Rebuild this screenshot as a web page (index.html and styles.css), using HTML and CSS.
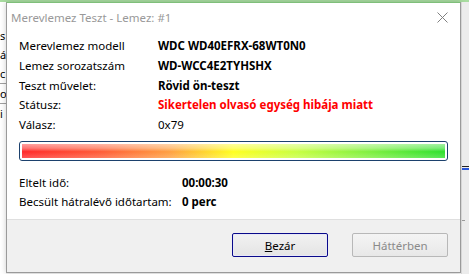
FILE: index.html
```html
<html lang="hu">
<head>
    <meta charset="UTF-8">
    <title>Merevlemez Teszt</title>
    <link rel="stylesheet" href="styles.css">
</head>
<body>
    <div class="desktop">
        <div class="side side-left">
            <span>s</span>
            <span>á</span>
            <span>c</span>
            <span class="rule"></span>
            <span>o</span>
            <span class="rule"></span>
            <span>i</span>
        </div>

        <div class="window">
            <div class="titlebar">
                <span class="title">Merevlemez Teszt - Lemez: #1</span>
                <svg class="close" width="11" height="11" viewBox="0 0 11 11">
                    <path d="M0.5 0.5 L10.5 10.5 M10.5 0.5 L0.5 10.5" stroke="#808080" stroke-width="1" fill="none"/>
                </svg>
            </div>

            <div class="content">
                <div class="info">
                    <div class="row"><span class="label">Merevlemez modell</span><span class="value bold">WDC WD40EFRX-68WT0N0</span></div>
                    <div class="row"><span class="label">Lemez sorozatszám</span><span class="value bold">WD-WCC4E2TYHSHX</span></div>
                    <div class="row"><span class="label">Teszt művelet:</span><span class="value bold">Rövid ön-teszt</span></div>
                    <div class="row"><span class="label">Státusz:</span><span class="value bold error">Sikertelen olvasó egység hibája miatt</span></div>
                    <div class="row"><span class="label">Válasz:</span><span class="value">0x79</span></div>
                </div>

                <div class="progress">
                    <div class="progress-fill"></div>
                </div>

                <div class="info info-time">
                    <div class="row"><span class="label">Eltelt idő:</span><span class="value bold">00:00:30</span></div>
                    <div class="row"><span class="label">Becsült hátralévő időtartam:</span><span class="value bold">0 perc</span></div>
                </div>
            </div>

            <div class="footer">
                <button class="btn btn-default"><u>B</u>ezár</button>
                <button class="btn" disabled>Háttérben</button>
            </div>
        </div>

        <div class="side side-right">
            <span class="line-dark"></span>
            <span class="line-blue"></span>
            <span class="tick"></span>
        </div>
    </div>
</body>
</html>
```

FILE: styles.css
```css
:root {
    --text: #000000;
    --muted: #999999;
    --error: #ff0000;
    --footer: #f0f0f0;
    --divider: #dfdfdf;
    --bar-border: #1c416d;
}

body {
    margin: 0;
    font-family: 'Noto Sans', 'Open Sans', sans-serif;
    font-size: 11.5px;
    color: var(--text);
    background: #f3f3f3;
    overflow: hidden;
}

.desktop {
    display: flex;
    height: 274px;
    border-top: 2px solid #a8dca0;
    box-sizing: border-box;
}

.side {
    display: flex;
    flex-direction: column;
    overflow: hidden;
}

.side-left {
    width: 6px;
    background: #ffffff;
    padding-top: 24px;
    line-height: 19px;
    font-size: 11px;
}

.side-left .rule {
    display: block;
    height: 1px;
    background: #a0a0a0;
}

.side-right {
    width: 7px;
    background: #ececec;
    border-left: 1px solid #d6d6d6;
    padding-top: 34px;
}

.line-dark {
    display: block;
    height: 1px;
    margin-top: 130px;
    background: #222;
}

.line-blue {
    display: block;
    height: 2px;
    margin-top: 1px;
    background: #2a56d8;
}

.tick {
    display: block;
    width: 3px;
    height: 1px;
    margin-top: 50px;
    background: #999;
}

.window {
    width: 456px;
    height: 271px;
    box-sizing: border-box;
    border: 1px solid #9a9a9a;
    border-top-color: #7fbf7a;
    background: #ffffff;
    display: flex;
    flex-direction: column;
    box-shadow: 0 0 6px rgba(0, 0, 0, 0.2);
}

.titlebar {
    height: 29px;
    display: flex;
    align-items: center;
    justify-content: space-between;
    padding: 0 12px 0 4px;
}

.title {
    color: var(--muted);
    font-size: 11.5px;
}

.content {
    flex: 1;
    padding: 4px 12px 0 12px;
}

.row {
    display: flex;
    height: 19.7px;
    align-items: center;
    white-space: nowrap;
}

.label {
    width: 139px;
    flex-shrink: 0;
}

.info-time .label {
    width: 163px;
}

.bold {
    font-weight: 700;
}

.error {
    color: var(--error);
}

.progress {
    margin: 7px 0 11px 0;
    height: 20px;
    box-sizing: border-box;
    border: 1px solid var(--bar-border);
    border-radius: 3px;
    padding: 2px;
    background: #ffffff;
}

.progress-fill {
    height: 100%;
    background:
        linear-gradient(to bottom, rgba(255, 255, 255, 0.55) 0%, rgba(255, 255, 255, 0.35) 30%, rgba(255, 255, 255, 0) 55%, rgba(255, 255, 255, 0.2) 100%),
        linear-gradient(to right, #ff2a2a 0%, #ff5a36 18%, #ffa040 35%, #ffff20 50%, #c8ff40 65%, #80f040 82%, #2ee02e 100%);
}

.footer {
    height: 50px;
    background: var(--footer);
    border-top: 1px solid var(--divider);
    display: flex;
    justify-content: flex-end;
    align-items: center;
    gap: 24px;
    padding: 0 12px 2px 0;
}

.btn {
    width: 96px;
    height: 24px;
    font-family: 'Noto Sans', 'Open Sans', sans-serif;
    font-size: 11.5px;
    color: var(--text);
    background: linear-gradient(to bottom, #f2f2f2, #e4e4e4);
    border: 1px solid #adadad;
    border-radius: 2px;
    padding: 0;
}

.btn-default {
    border: 1px solid #0a0a8a;
    box-shadow: inset 0 0 0 1px #e8e8f8;
}

.btn:disabled {
    color: #8a8a8a;
    border-color: #b8b8b8;
    background: linear-gradient(to bottom, #f4f4f4, #e8e8e8);
}
```
